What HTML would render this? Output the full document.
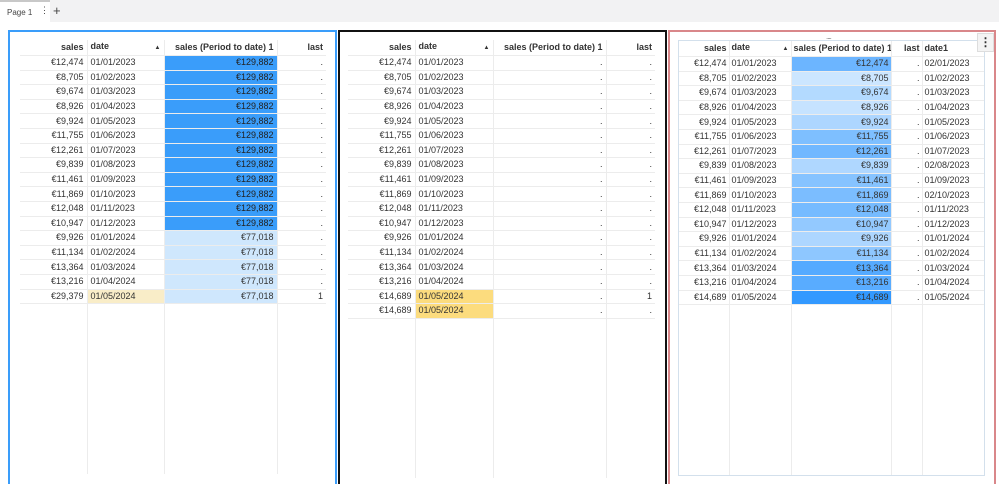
<!DOCTYPE html>
<html style="width:999px;height:484px;overflow:hidden"><head><meta charset="utf-8"><style>
*{box-sizing:border-box;margin:0;padding:0}
body{width:999px;height:484px;overflow:hidden;background:#fff;font-family:"Liberation Sans",sans-serif;font-size:9px;color:#333;position:relative}
.tabbar{position:absolute;left:0;top:0;width:999px;height:22px;background:#f2f2f3}
.tab{position:absolute;left:0;top:0;width:50px;height:22px;background:#fff;border-top:2px solid #c8c8c8;font-size:8px;color:#444;padding:6px 0 0 7px;white-space:nowrap}
.p{position:absolute;top:30px;height:454px}
table{position:absolute;border-collapse:collapse;table-layout:fixed}
td,th{height:14.6px;padding:0 3px;white-space:nowrap;overflow:hidden;border-bottom:1px solid #ececec;border-right:1px solid #ececec;line-height:13px}
td:last-child,th:last-child{border-right:none}
th{font-weight:bold;text-align:left;height:15px}
.r{text-align:right}
tr.f td{height:170px;border-bottom:none}
.d{background:#3a9dfa;color:#222}
.l{background:#cfe7fd}
.y{background:#f9edc8}
.yy{background:#fcdc7e}
.arr{float:right;font-size:6px;margin-top:2px}
.t3 td,.t3 th{padding:0 2px}
</style></head><body>
<div class="tabbar"><div class="tab">Page 1</div><span style="position:absolute;left:40px;top:5px;font-size:9px;color:#444">⋮</span><span style="position:absolute;left:53px;top:3px;font-size:13px;color:#444">+</span></div>

<div class="p" style="left:8px;width:329px;border:2px solid #3a9dfa;border-bottom:none"></div>
<table style="left:20px;top:40px;width:306px">
<colgroup><col style="width:67px"><col style="width:77px"><col style="width:113px"><col style="width:49px"></colgroup>
<tr><th class="r">sales</th><th>date<span class="arr">▲</span></th><th class="r">sales (Period to date) 1</th><th class="r">last</th></tr>
<tr><td class="r">€12,474</td><td>01/01/2023</td><td class="r d">€129,882</td><td class="r">.</td></tr>
<tr><td class="r">€8,705</td><td>01/02/2023</td><td class="r d">€129,882</td><td class="r">.</td></tr>
<tr><td class="r">€9,674</td><td>01/03/2023</td><td class="r d">€129,882</td><td class="r">.</td></tr>
<tr><td class="r">€8,926</td><td>01/04/2023</td><td class="r d">€129,882</td><td class="r">.</td></tr>
<tr><td class="r">€9,924</td><td>01/05/2023</td><td class="r d">€129,882</td><td class="r">.</td></tr>
<tr><td class="r">€11,755</td><td>01/06/2023</td><td class="r d">€129,882</td><td class="r">.</td></tr>
<tr><td class="r">€12,261</td><td>01/07/2023</td><td class="r d">€129,882</td><td class="r">.</td></tr>
<tr><td class="r">€9,839</td><td>01/08/2023</td><td class="r d">€129,882</td><td class="r">.</td></tr>
<tr><td class="r">€11,461</td><td>01/09/2023</td><td class="r d">€129,882</td><td class="r">.</td></tr>
<tr><td class="r">€11,869</td><td>01/10/2023</td><td class="r d">€129,882</td><td class="r">.</td></tr>
<tr><td class="r">€12,048</td><td>01/11/2023</td><td class="r d">€129,882</td><td class="r">.</td></tr>
<tr><td class="r">€10,947</td><td>01/12/2023</td><td class="r d">€129,882</td><td class="r">.</td></tr>
<tr><td class="r">€9,926</td><td>01/01/2024</td><td class="r l">€77,018</td><td class="r">.</td></tr>
<tr><td class="r">€11,134</td><td>01/02/2024</td><td class="r l">€77,018</td><td class="r">.</td></tr>
<tr><td class="r">€13,364</td><td>01/03/2024</td><td class="r l">€77,018</td><td class="r">.</td></tr>
<tr><td class="r">€13,216</td><td>01/04/2024</td><td class="r l">€77,018</td><td class="r">.</td></tr>
<tr><td class="r">€29,379</td><td class="y">01/05/2024</td><td class="r l">€77,018</td><td class="r">1</td></tr>
<tr class="f"><td></td><td></td><td></td><td></td></tr>
</table>

<div class="p" style="left:338px;width:329px;border:2px solid #111;border-bottom:none"></div>
<table style="left:348px;top:40px;width:307px">
<colgroup><col style="width:67px"><col style="width:78px"><col style="width:113px"><col style="width:49px"></colgroup>
<tr><th class="r">sales</th><th>date<span class="arr">▲</span></th><th class="r">sales (Period to date) 1</th><th class="r">last</th></tr>
<tr><td class="r">€12,474</td><td>01/01/2023</td><td class="r">.</td><td class="r">.</td></tr>
<tr><td class="r">€8,705</td><td>01/02/2023</td><td class="r">.</td><td class="r">.</td></tr>
<tr><td class="r">€9,674</td><td>01/03/2023</td><td class="r">.</td><td class="r">.</td></tr>
<tr><td class="r">€8,926</td><td>01/04/2023</td><td class="r">.</td><td class="r">.</td></tr>
<tr><td class="r">€9,924</td><td>01/05/2023</td><td class="r">.</td><td class="r">.</td></tr>
<tr><td class="r">€11,755</td><td>01/06/2023</td><td class="r">.</td><td class="r">.</td></tr>
<tr><td class="r">€12,261</td><td>01/07/2023</td><td class="r">.</td><td class="r">.</td></tr>
<tr><td class="r">€9,839</td><td>01/08/2023</td><td class="r">.</td><td class="r">.</td></tr>
<tr><td class="r">€11,461</td><td>01/09/2023</td><td class="r">.</td><td class="r">.</td></tr>
<tr><td class="r">€11,869</td><td>01/10/2023</td><td class="r">.</td><td class="r">.</td></tr>
<tr><td class="r">€12,048</td><td>01/11/2023</td><td class="r">.</td><td class="r">.</td></tr>
<tr><td class="r">€10,947</td><td>01/12/2023</td><td class="r">.</td><td class="r">.</td></tr>
<tr><td class="r">€9,926</td><td>01/01/2024</td><td class="r">.</td><td class="r">.</td></tr>
<tr><td class="r">€11,134</td><td>01/02/2024</td><td class="r">.</td><td class="r">.</td></tr>
<tr><td class="r">€13,364</td><td>01/03/2024</td><td class="r">.</td><td class="r">.</td></tr>
<tr><td class="r">€13,216</td><td>01/04/2024</td><td class="r">.</td><td class="r">.</td></tr>
<tr><td class="r">€14,689</td><td class="yy">01/05/2024</td><td class="r">.</td><td class="r">1</td></tr>
<tr><td class="r">€14,689</td><td class="yy">01/05/2024</td><td class="r">.</td><td class="r">.</td></tr>
<tr class="f" style="height:160px"><td style="height:160px"></td><td style="height:160px"></td><td style="height:160px"></td><td style="height:160px"></td></tr>
</table>

<div class="p" style="left:668px;width:328px;border:2px solid #d9878a;border-bottom:none"></div>
<div style="position:absolute;left:826px;top:32px;font-size:8px;color:#777;letter-spacing:-1px">....</div>
<div style="position:absolute;left:678px;top:40px;width:307px;height:436px;border:1px solid #d3e0ec;overflow:hidden">
<table class="t3" style="left:0;top:0;width:305px">
<colgroup><col style="width:50px"><col style="width:62px"><col style="width:100px"><col style="width:31px"><col style="width:62px"></colgroup>
<tr><th class="r">sales</th><th>date<span class="arr">▲</span></th><th class="r">sales (Period to date) 1</th><th class="r">last</th><th>date1</th></tr>
<tr><td class="r">€12,474</td><td>01/01/2023</td><td class="r" style="background:rgb(108,181,255)">€12,474</td><td class="r">.</td><td>02/01/2023</td></tr>
<tr><td class="r">€8,705</td><td>01/02/2023</td><td class="r" style="background:rgb(204,230,255)">€8,705</td><td class="r">.</td><td>01/02/2023</td></tr>
<tr><td class="r">€9,674</td><td>01/03/2023</td><td class="r" style="background:rgb(179,218,255)">€9,674</td><td class="r">.</td><td>01/03/2023</td></tr>
<tr><td class="r">€8,926</td><td>01/04/2023</td><td class="r" style="background:rgb(198,227,255)">€8,926</td><td class="r">.</td><td>01/04/2023</td></tr>
<tr><td class="r">€9,924</td><td>01/05/2023</td><td class="r" style="background:rgb(173,214,255)">€9,924</td><td class="r">.</td><td>01/05/2023</td></tr>
<tr><td class="r">€11,755</td><td>01/06/2023</td><td class="r" style="background:rgb(126,191,255)">€11,755</td><td class="r">.</td><td>01/06/2023</td></tr>
<tr><td class="r">€12,261</td><td>01/07/2023</td><td class="r" style="background:rgb(113,184,255)">€12,261</td><td class="r">.</td><td>01/07/2023</td></tr>
<tr><td class="r">€9,839</td><td>01/08/2023</td><td class="r" style="background:rgb(175,215,255)">€9,839</td><td class="r">.</td><td>02/08/2023</td></tr>
<tr><td class="r">€11,461</td><td>01/09/2023</td><td class="r" style="background:rgb(134,195,255)">€11,461</td><td class="r">.</td><td>01/09/2023</td></tr>
<tr><td class="r">€11,869</td><td>01/10/2023</td><td class="r" style="background:rgb(123,189,255)">€11,869</td><td class="r">.</td><td>02/10/2023</td></tr>
<tr><td class="r">€12,048</td><td>01/11/2023</td><td class="r" style="background:rgb(118,187,255)">€12,048</td><td class="r">.</td><td>01/11/2023</td></tr>
<tr><td class="r">€10,947</td><td>01/12/2023</td><td class="r" style="background:rgb(147,201,255)">€10,947</td><td class="r">.</td><td>01/12/2023</td></tr>
<tr><td class="r">€9,926</td><td>01/01/2024</td><td class="r" style="background:rgb(173,214,255)">€9,926</td><td class="r">.</td><td>01/01/2024</td></tr>
<tr><td class="r">€11,134</td><td>01/02/2024</td><td class="r" style="background:rgb(142,199,255)">€11,134</td><td class="r">.</td><td>01/02/2024</td></tr>
<tr><td class="r">€13,364</td><td>01/03/2024</td><td class="r" style="background:rgb(85,170,255)">€13,364</td><td class="r">.</td><td>01/03/2024</td></tr>
<tr><td class="r">€13,216</td><td>01/04/2024</td><td class="r" style="background:rgb(89,172,255)">€13,216</td><td class="r">.</td><td>01/04/2024</td></tr>
<tr><td class="r">€14,689</td><td>01/05/2024</td><td class="r" style="background:rgb(51,153,255)">€14,689</td><td class="r">.</td><td>01/05/2024</td></tr>
<tr class="f"><td></td><td></td><td></td><td></td><td></td></tr>
</table>
</div>
<div style="position:absolute;left:977px;top:33px;width:17px;height:19px;background:#f4f4f4;border:1px solid #ddd;text-align:center;font-size:12px;font-weight:bold;line-height:17px;color:#333">⋮</div>
</body></html>
